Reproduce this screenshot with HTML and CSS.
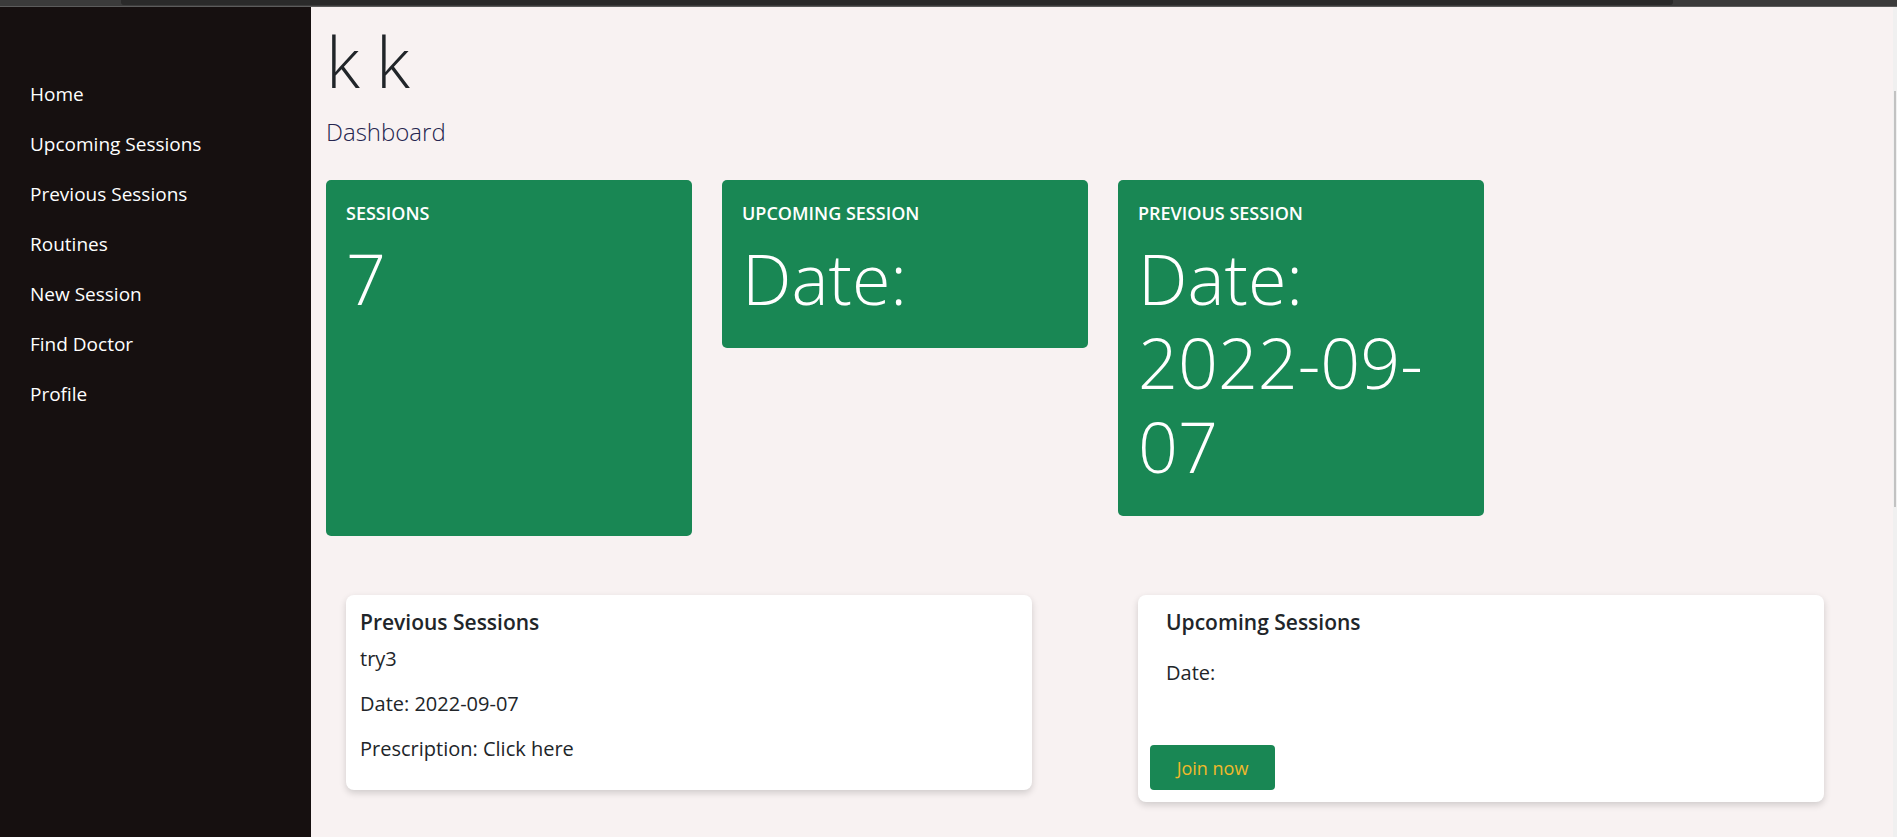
FILE: index.html
```html
<!DOCTYPE html>
<html lang="en">
<head>
<meta charset="utf-8">
<title>Dashboard</title>
<link rel="stylesheet" href="styles.css">
</head>
<body>
<div class="topbar"><div class="topbar-tab"></div></div>
<div class="app">
  <nav class="sidebar">
    <a class="nav-link" href="#">Home</a>
    <a class="nav-link" href="#">Upcoming Sessions</a>
    <a class="nav-link" href="#">Previous Sessions</a>
    <a class="nav-link" href="#">Routines</a>
    <a class="nav-link" href="#">New Session</a>
    <a class="nav-link" href="#">Find Doctor</a>
    <a class="nav-link" href="#">Profile</a>
  </nav>
  <main class="main">
    <h1 class="title">k k</h1>
    <p class="subtitle">Dashboard</p>
    <div class="stats">
      <div class="stat stat-tall">
        <h5 class="stat-label">Sessions</h5>
        <p class="stat-value">7</p>
      </div>
      <div class="stat">
        <h5 class="stat-label">Upcoming Session</h5>
        <p class="stat-value">Date:</p>
      </div>
      <div class="stat">
        <h5 class="stat-label">Previous Session</h5>
        <p class="stat-value">Date: 2022-09-07</p>
      </div>
    </div>
    <div class="panels">
      <div class="panel">
        <div class="panel-body">
          <h5 class="panel-title">Previous Sessions</h5>
          <p class="panel-text">try3</p>
          <p class="panel-text">Date: 2022-09-07</p>
          <p class="panel-text">Prescription: Click here</p>
        </div>
      </div>
      <div class="panel">
        <div class="panel-body panel-body-wide">
          <h5 class="panel-title">Upcoming Sessions</h5>
          <p class="panel-text panel-text-spaced">Date:</p>
        </div>
        <div class="panel-footer">
          <button class="btn-join" type="button">Join now</button>
        </div>
      </div>
    </div>
  </main>
  <div class="scrollbar"><div class="scrollbar-thumb"></div></div>
</div>
</body>
</html>
```

FILE: styles.css
```css
* { box-sizing: border-box; }

html, body {
  margin: 0;
  padding: 0;
  height: 837px;
  overflow: hidden;
}

body {
  display: flex;
  flex-direction: column;
  font-family: "Open Sans", "Noto Sans", sans-serif;
  color: #212529;
  background: #f8f2f2;
}

.topbar {
  height: 7px;
  background: #3b3b3b;
  border-bottom: 1px solid #5c5c5c;
  padding-left: 121px;
  flex: none;
}

.topbar-tab {
  width: 1552px;
  height: 5px;
  background: #2a2a2a;
  border-radius: 0 0 3px 3px;
}

.app {
  flex: 1;
  display: flex;
  min-height: 0;
}

.sidebar {
  width: 311px;
  flex: none;
  background: #161010;
  padding-top: 62px;
  padding-left: 30px;
  display: flex;
  flex-direction: column;
}

.nav-link {
  color: #ffffff;
  text-decoration: none;
  font-size: 19px;
  line-height: 50px;
  height: 50px;
}

.main {
  flex: 1;
  background: #f8f2f2;
  padding: 11px 16px 0 15px;
  min-width: 0;
}

.title {
  margin: 0;
  font-size: 70px;
  font-weight: 300;
  line-height: 86px;
  letter-spacing: -1px;
  color: #212529;
}

.subtitle {
  margin: 10px 0 0 0;
  font-size: 24px;
  font-weight: 300;
  line-height: 36px;
  color: #25254f;
}

.stats {
  display: flex;
  align-items: flex-start;
  gap: 30px;
  margin-top: 30px;
}

.stat {
  width: 366px;
  background: #198754;
  color: #ffffff;
  border-radius: 5px;
  padding: 22px 20px 28px 20px;
}

.stat-tall {
  height: 356px;
}

.stat-label {
  margin: 0 0 11px 0;
  font-size: 18px;
  font-weight: 600;
  line-height: 23px;
  text-transform: uppercase;
}

.stat-value {
  margin: 0;
  font-size: 70px;
  font-weight: 300;
  line-height: 84px;
}

.panels {
  display: flex;
  align-items: flex-start;
  gap: 106px;
  margin-top: 59px;
  padding-left: 20px;
}

.panel {
  width: 686px;
  background: #ffffff;
  border-radius: 8px;
  box-shadow: 0 3px 7px rgba(0, 0, 0, 0.16);
}

.panel-body {
  padding: 14px 14px 19px 14px;
}

.panel-body-wide {
  padding: 14px 28px 50px 28px;
}

.panel-title {
  margin: 0 0 1px 0;
  font-size: 21px;
  font-weight: 600;
  line-height: 26px;
  color: #212529;
}

.panel-text {
  margin: 0;
  font-size: 20px;
  line-height: 45px;
  color: #212529;
}

.panel-text-spaced {
  margin-top: 15px;
}

.panel-footer {
  padding: 0 12px 12px 12px;
}

.btn-join {
  width: 125px;
  height: 45px;
  border: none;
  border-radius: 4px;
  background: #198754;
  color: #f0b92b;
  font-family: "Open Sans", "Noto Sans", sans-serif;
  font-size: 18px;
  padding: 0;
}

.scrollbar {
  width: 4px;
  flex: none;
  background: #f0f0f0;
  padding-top: 84px;
}

.scrollbar-thumb {
  width: 2px;
  height: 416px;
  background: #c2c2c2;
  margin-left: 1px;
}
```
